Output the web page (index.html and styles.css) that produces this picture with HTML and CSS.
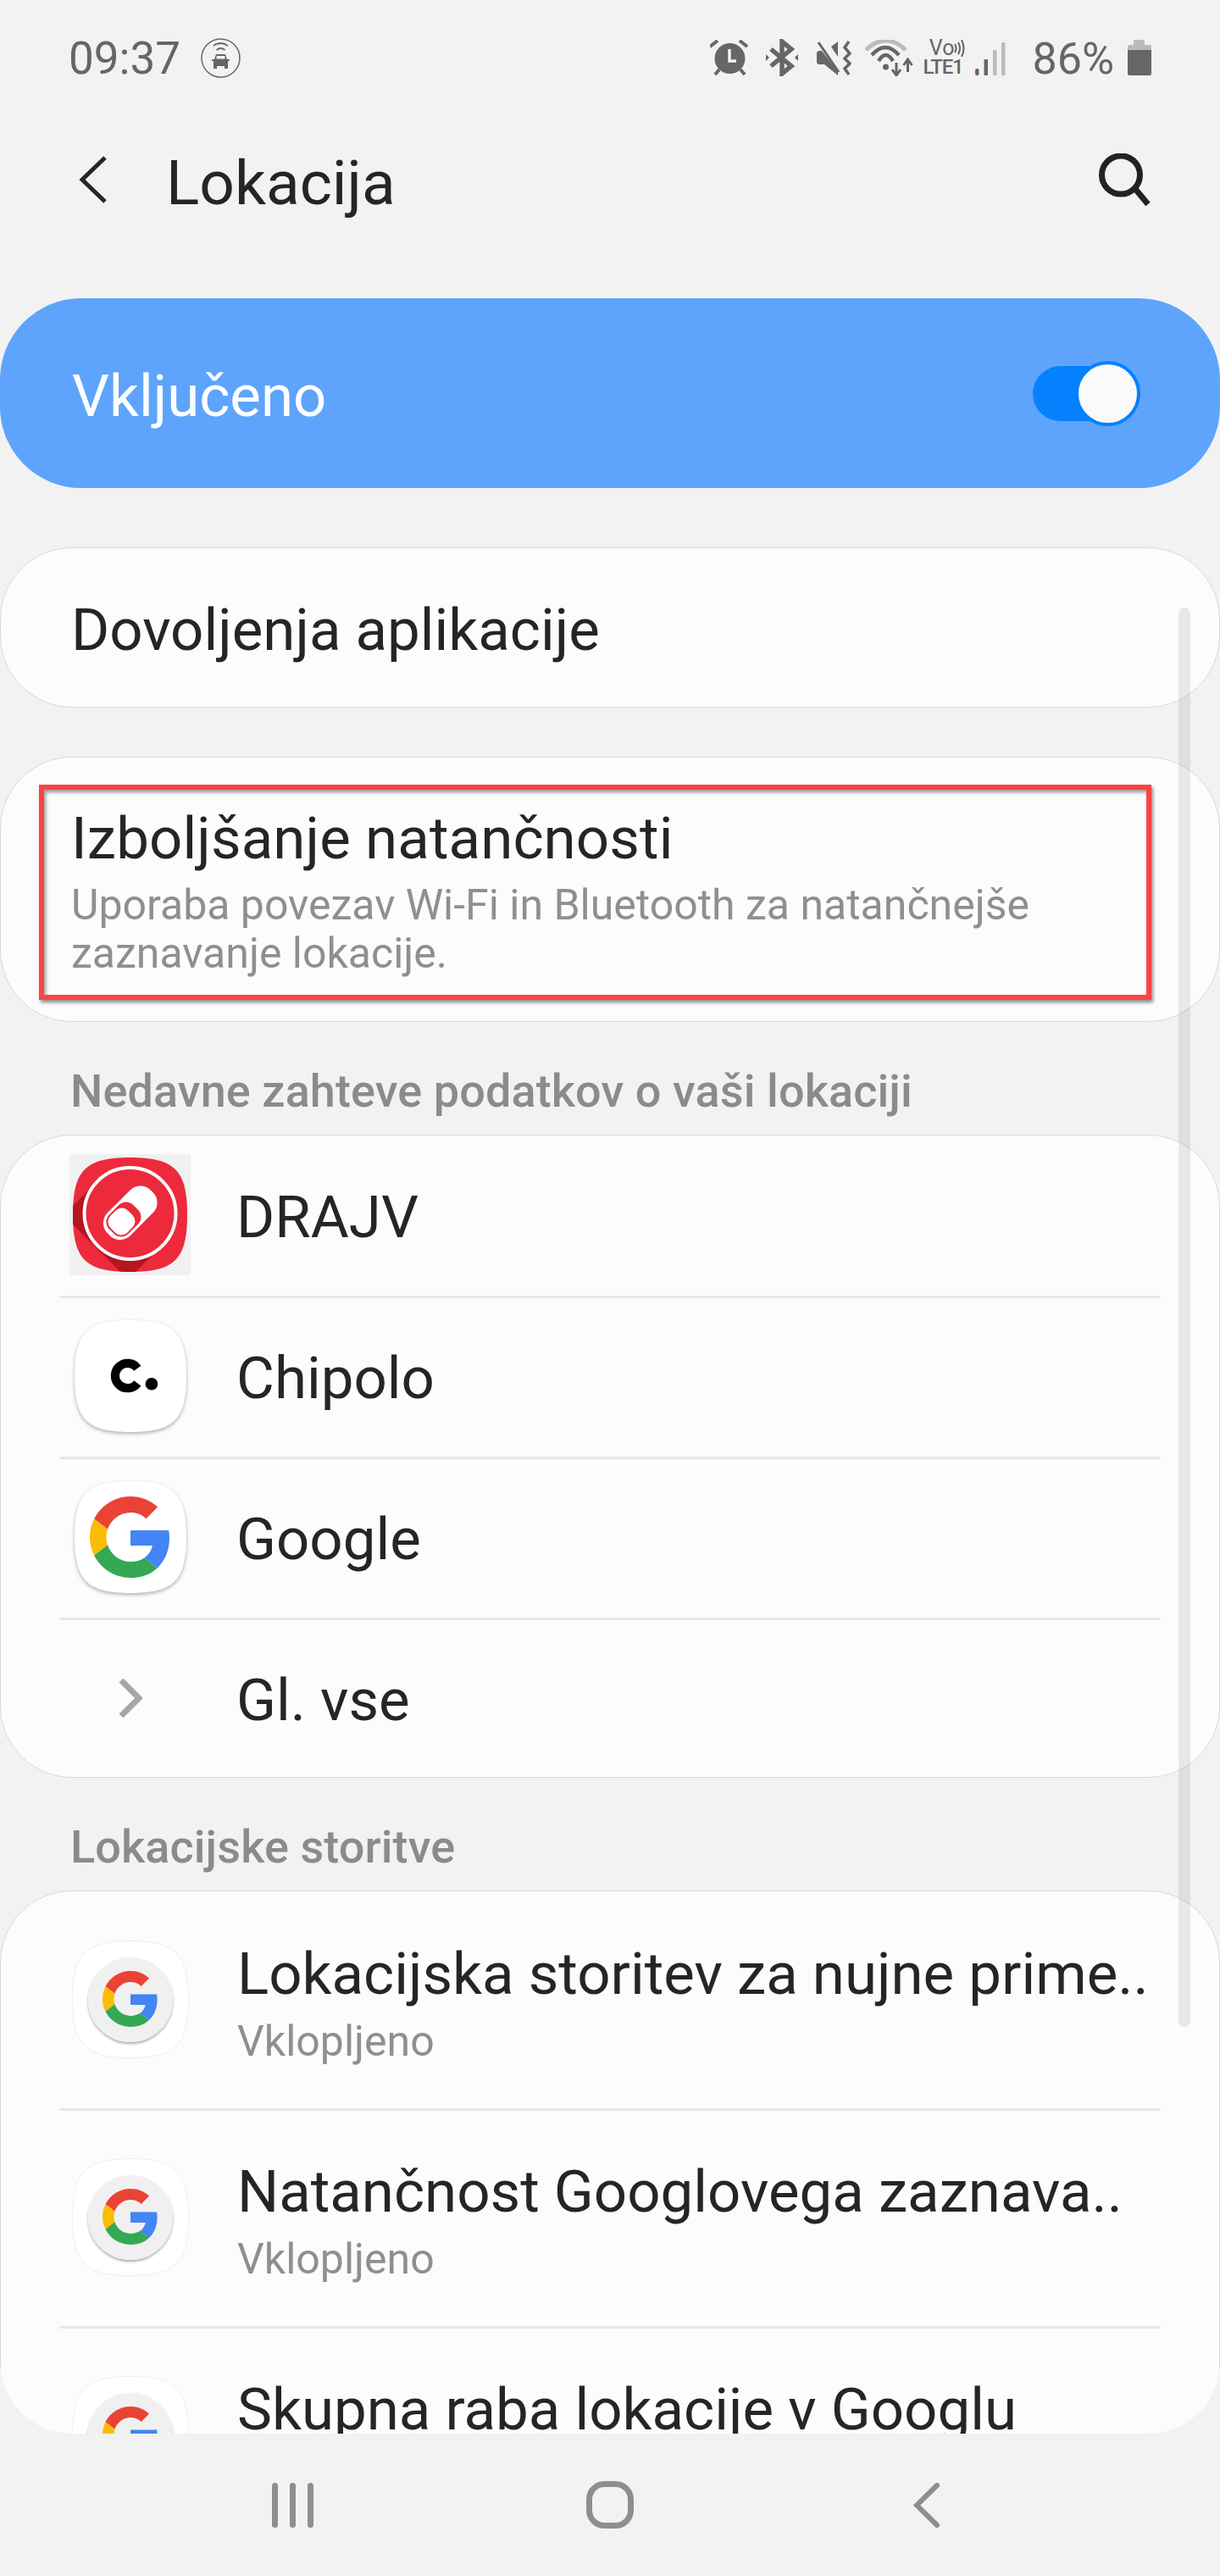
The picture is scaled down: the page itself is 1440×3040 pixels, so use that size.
FILE: index.html

```html
<!DOCTYPE html>
<html lang="sl">
<head>
    <meta charset="UTF-8">
    <meta name="viewport" content="width=device-width, initial-scale=1.0">
    <title>Lokacija</title>
    <link rel="stylesheet" href="styles.css">
</head>
<body>
    <!-- shared logo shapes -->
    <svg class="defs" width="0" height="0">
        <filter id="disc-shadow" x="-10%" y="-10%" width="120%" height="125%">
            <feDropShadow dx="0" dy="2" stdDeviation="1.5" flood-opacity="0.35"/>
        </filter>
        <clipPath id="squircle-clip">
            <path d="M67.5 0C120 0 135 15 135 67.5S120 135 67.5 135 0 120 0 67.5 15 0 67.5 0Z"/>
        </clipPath>
        <symbol id="g-logo" viewBox="0 0 48 48">
            <path fill="#EA4335" d="M24 9.5c3.54 0 6.71 1.22 9.21 3.6l6.85-6.85C35.9 2.38 30.47 0 24 0 14.62 0 6.51 5.38 2.56 13.22l7.98 6.19C12.43 13.72 17.74 9.5 24 9.5z"/>
            <path fill="#4285F4" d="M46.98 24.55c0-1.57-.15-3.09-.38-4.55H24v9.02h12.94c-.58 2.96-2.26 5.48-4.78 7.18l7.73 6c4.51-4.18 7.09-10.36 7.09-17.65z"/>
            <path fill="#FBBC05" d="M10.53 28.59c-.48-1.45-.76-2.99-.76-4.59s.27-3.14.76-4.59l-7.98-6.19C.92 16.46 0 20.12 0 24c0 3.88.92 7.54 2.56 10.78l7.97-6.19z"/>
            <path fill="#34A853" d="M24 48c6.48 0 11.93-2.13 15.89-5.81l-7.73-6c-2.15 1.45-4.92 2.3-8.16 2.3-6.26 0-11.57-4.22-13.47-9.91l-7.98 6.19C6.51 42.62 14.62 48 24 48z"/>
        </symbol>
        <symbol id="service-logo" viewBox="0 0 138 139">
            <path d="M69 .5C122 .5 137.500 16 137.500 69.500S122 138.500 69 138.500 .5 123 .5 69.500 16 .5 69 .5Z" fill="#fff" stroke="#eeeeee"/>
            <circle cx="69" cy="70" r="50" fill="#f0f0f0" filter="url(#disc-shadow)"/>
            <use href="#g-logo" x="36" y="35" width="66" height="68"/>
        </symbol>
    </svg>

    <div class="screen">
        <div class="status-bar">
            <div class="status-left">
                <span class="time">09:37</span>
                <svg class="ic-car" width="47" height="47" viewBox="0 0 47 47">
                    <circle cx="23.5" cy="23.5" r="22.5" fill="none" stroke="#666" stroke-width="1.5"/>
                    <path d="M15 9Q23.5 3 32 9M18.5 14Q23.500 10 28.500 14" fill="none" stroke="#666" stroke-width="1.800"/>
                    <path d="M16 25l2-6h11l2 6h3v2h-2v9h-4v-3h-9v3h-4v-9h-2v-2z" fill="#666"/>
                    <rect x="18.500" y="21" width="10" height="3.500" fill="#f2f2f2"/>
                </svg>
            </div>
            <div class="status-right">
                <svg class="ic-alarm" width="45" height="42" viewBox="0 0 45 42">
                    <circle cx="23.5" cy="22" r="18" fill="#666"/>
                    <path d="M23 11V25H31" fill="none" stroke="#f2f2f2" stroke-width="3.5"/>
                    <path d="M0 8L9 1M35 1L44 8M6 41L11 35M41 41L36 35" fill="none" stroke="#666" stroke-width="4"/>
                </svg>
                <svg class="ic-bt" width="39" height="44" viewBox="0 0 39 44">
                    <path d="M6 12L30 32L19 41V3L30 12L6 32" fill="none" stroke="#666" stroke-width="5.5"/>
                    <path d="M0 18L4 22L0 26ZM38 18L34 22L38 26Z" fill="#666"/>
                </svg>
                <svg class="ic-mute" width="41" height="42" viewBox="0 0 41 42">
                    <path d="M2 13H6L25 37V42L9 29H2L0 27V15Z" fill="#666"/>
                    <path d="M17 8L25 2V20Z" fill="#666"/>
                    <path d="M2 3L26 38" fill="none" stroke="#666" stroke-width="3"/>
                    <path d="M38 2L33 9L39 16L33 22L39 28L33 34L38 41" fill="none" stroke="#666" stroke-width="3.5"/>
                </svg>
                <svg class="ic-wifi" width="57" height="43" viewBox="0 0 57 43">
                    <path d="M1 12Q24.5 -10 48 12" fill="none" stroke="#bbb" stroke-width="5"/>
                    <path d="M8 18Q24 0 40 18M16 25Q24.5 11 33 25" fill="none" stroke="#666" stroke-width="4.5"/>
                    <circle cx="24.5" cy="32" r="3.5" fill="#666"/>
                    <path d="M37 27V40M32 35L37 42L42 35" fill="none" stroke="#666" stroke-width="3"/>
                    <path d="M50.5 38V25M45.5 30L50.5 23L55.5 30" fill="none" stroke="#666" stroke-width="3"/>
                </svg>
                <div class="volte">
                    <div class="volte-top">
                        <span>Vo</span>
                        <svg width="13" height="20" viewBox="0 0 13 20">
                            <path d="M1 5Q4 10 1 15M5 3Q9 10 5 17M9 0Q14 10 9 20" fill="none" stroke="#666" stroke-width="2"/>
                        </svg>
                    </div>
                    <div class="volte-lte">LTE1</div>
                </div>
                <svg class="ic-signal" width="36" height="39" viewBox="0 0 36 39">
                    <rect x="0" y="31" width="4.5" height="8" rx="2" fill="#666"/>
                    <rect x="10.5" y="20" width="4.5" height="19" rx="1" fill="#666"/>
                    <rect x="21" y="9" width="4.5" height="30" rx="1" fill="#bbb"/>
                    <rect x="31" y="0" width="4.5" height="39" rx="1" fill="#bbb"/>
                </svg>
                <span class="battery-text">86%</span>
                <svg class="ic-battery" width="28" height="42" viewBox="0 0 28 42">
                    <path d="M7 1Q7 0 8 0H19Q20 0 20 1V6H26Q28 6 28 8V12H0V8Q0 6 2 6H7Z" fill="#bbb"/>
                    <path d="M0 12H28V40Q28 42 26 42H2Q0 42 0 40Z" fill="#666"/>
                </svg>
            </div>
        </div>

        <div class="app-bar">
            <svg width="33" height="56" viewBox="0 0 33 56">
                <path d="M31 2L4 28L31 54" fill="none" stroke="#252525" stroke-width="5"/>
            </svg>
            <h1 class="page-title">Lokacija</h1>
            <svg class="search-icon" width="62" height="62" viewBox="0 0 62 62">
                <circle cx="26" cy="25.5" r="22.5" fill="none" stroke="#222" stroke-width="7"/>
                <path d="M43 42L58 60" fill="none" stroke="#222" stroke-width="7"/>
            </svg>
        </div>

        <div class="scroll-area">
            <div class="master-switch">
                <span class="item-title on-blue">Vključeno</span>
                <div class="toggle">
                    <div class="toggle-track"></div>
                    <div class="toggle-thumb"></div>
                </div>
            </div>

            <div class="card card-single">
                <span class="item-title">Dovoljenja aplikacije</span>
            </div>

            <div class="card card-accuracy">
                <div class="item-title">Izboljšanje natančnosti</div>
                <div class="item-sub">Uporaba povezav Wi-Fi in Bluetooth za natančnejše<br>zaznavanje lokacije.</div>
                <div class="highlight-box"></div>
            </div>

            <div class="section-label">Nedavne zahteve podatkov o vaši lokaciji</div>

            <div class="card card-list">
                <div class="app-row">
                    <div class="app-icon-wrap drajv-bg">
                        <svg width="135" height="135" viewBox="0 0 135 135">
                            <g clip-path="url(#squircle-clip)">
                                <rect width="135" height="135" fill="#ec2a3b"/>
                                <path d="M29 28L-11 68L65 144L105 104Z" fill="#b5161f"/>
                            </g>
                            <circle cx="67.5" cy="66" r="54" fill="#ec2a3b" stroke="#fff" stroke-width="4"/>
                            <g transform="rotate(-45 67 66)">
                                <rect x="32" y="47" width="72" height="38" rx="17" fill="#fff"/>
                                <rect x="37" y="50" width="40" height="32" rx="12" fill="#ec2a3b"/>
                                <rect x="39" y="52" width="29" height="28" rx="10" fill="#fff"/>
                            </g>
                        </svg>
                    </div>
                    <span class="item-title">DRAJV</span>
                </div>
                <div class="divider"></div>
                <div class="app-row">
                    <div class="app-icon-wrap">
                        <svg class="squircle-shadow" width="132" height="132" viewBox="0 0 135 135">
                            <path d="M67.5 0C120 0 135 15 135 67.5S120 135 67.5 135 0 120 0 67.5 15 0 67.5 0Z" fill="#fff"/>
                            <path d="M76 59A15 15 0 1 0 76 77" fill="none" stroke="#000" stroke-width="10.5" transform="translate(0 -1)"/>
                            <circle cx="93" cy="77" r="7.5" fill="#000"/>
                        </svg>
                    </div>
                    <span class="item-title">Chipolo</span>
                </div>
                <div class="divider"></div>
                <div class="app-row">
                    <div class="app-icon-wrap">
                        <svg class="squircle-shadow" width="132" height="132" viewBox="0 0 132 132">
                            <path d="M66 0C117 0 132 15 132 66S117 132 66 132 0 117 0 66 15 0 66 0Z" fill="#fff"/>
                            <use href="#g-logo" x="18" y="17" width="96" height="98"/>
                        </svg>
                    </div>
                    <span class="item-title">Google</span>
                </div>
                <div class="divider"></div>
                <div class="app-row">
                    <div class="app-icon-wrap">
                        <svg width="28" height="46" viewBox="0 0 28 46">
                            <path d="M3 2L24 23L3 44" fill="none" stroke="#a6a6a6" stroke-width="7"/>
                        </svg>
                    </div>
                    <span class="item-title">Gl. vse</span>
                </div>
            </div>

            <div class="section-label">Lokacijske storitve</div>

            <div class="card card-services">
                <div class="service-row">
                    <svg class="service-icon" width="138" height="139"><use href="#service-logo" width="138" height="139"/></svg>
                    <div class="service-text">
                        <div class="item-title">Lokacijska storitev za nujne prime..</div>
                        <div class="item-sub">Vklopljeno</div>
                    </div>
                </div>
                <div class="divider"></div>
                <div class="service-row">
                    <svg class="service-icon" width="138" height="139"><use href="#service-logo" width="138" height="139"/></svg>
                    <div class="service-text">
                        <div class="item-title">Natančnost Googlovega zaznava..</div>
                        <div class="item-sub">Vklopljeno</div>
                    </div>
                </div>
                <div class="divider"></div>
                <div class="service-row">
                    <svg class="service-icon" width="138" height="139"><use href="#service-logo" width="138" height="139"/></svg>
                    <div class="service-text">
                        <div class="item-title">Skupna raba lokacije v Googlu</div>
                    </div>
                </div>
            </div>
        </div>

        <div class="scrollbar"></div>

        <div class="nav-bar">
            <svg class="nav-recent" width="49" height="53" viewBox="0 0 49 53">
                <rect x="0" y="0" width="7" height="53" rx="3.5"/>
                <rect x="21" y="0" width="7" height="53" rx="3.5"/>
                <rect x="42" y="0" width="7" height="53" rx="3.5"/>
            </svg>
            <svg class="nav-home" width="56" height="56" viewBox="0 0 56 56">
                <rect x="3.5" y="3.5" width="49" height="49" rx="18" fill="none" stroke="#8e8e8e" stroke-width="7"/>
            </svg>
            <svg class="nav-back" width="31" height="53" viewBox="0 0 31 53">
                <path d="M28 3L4 26.5L28 50" fill="none" stroke="#8e8e8e" stroke-width="6" stroke-linecap="round"/>
            </svg>
        </div>
    </div>
</body>
</html>
```

FILE: styles.css

```css
* {
    margin: 0;
    padding: 0;
    box-sizing: border-box;
}

body {
    font-family: Roboto, "Liberation Sans", sans-serif;
    background-color: #f2f2f2;
    color: #252525;
}

.defs {
    display: block;
    height: 0;
}

.screen {
    position: relative;
    width: 1440px;
    height: 3040px;
    display: flex;
    flex-direction: column;
    overflow: hidden;
    background-color: #f2f2f2;
}

/* status bar */
.status-bar {
    height: 136px;
    flex: none;
    display: flex;
    align-items: center;
    justify-content: space-between;
    padding: 0 81px;
    color: #666;
}

.status-left,
.status-right {
    display: flex;
    align-items: center;
}

.time {
    font-size: 53px;
    margin-top: 2px;
}

.ic-car { margin-left: 24px; }
.ic-bt { margin-left: 21px; }
.ic-mute { margin-left: 21px; }
.ic-wifi { margin-left: 16px; }
.ic-signal { margin-left: 12px; margin-top: 3px; }
.ic-battery { margin-left: 16px; }

.volte {
    width: 50px;
    height: 42px;
    margin-left: 11px;
    display: flex;
    flex-direction: column;
    justify-content: space-between;
}

.volte-top {
    display: flex;
    justify-content: flex-end;
    align-items: center;
    height: 20px;
    font-size: 25px;
    line-height: 20px;
}

.volte-lte {
    font-size: 24px;
    line-height: 19px;
    font-weight: 500;
    letter-spacing: -1.2px;
}

.battery-text {
    font-size: 52px;
    margin-left: 31px;
    margin-top: 2px;
}

/* app bar */
.app-bar {
    height: 216px;
    flex: none;
    display: flex;
    align-items: center;
    padding: 0 81px 64px 93px;
}

.page-title {
    font-size: 73px;
    font-weight: 400;
    line-height: 84px;
    margin: 8px 0 0 70px;
    flex: 1;
}

/* scrolling content */
.scroll-area {
    height: 2520px;
    flex: none;
    overflow: hidden;
    border-radius: 0 0 85px 85px;
}

.master-switch {
    height: 224px;
    display: flex;
    align-items: center;
    justify-content: space-between;
    padding: 0 94px 0 85px;
    background-color: #5ea4fc;
    border-radius: 96px;
    margin-bottom: 70px;
}

.toggle {
    position: relative;
    width: 127px;
    height: 77px;
}

.toggle-track {
    width: 110px;
    height: 65px;
    margin-top: 6px;
    border-radius: 33px;
    background-color: #0581fe;
}

.toggle-thumb {
    position: absolute;
    top: 0;
    right: 0;
    width: 77px;
    height: 77px;
    border: 4px solid #0581fe;
    border-radius: 50%;
    background-color: #fafafa;
}

.card {
    position: relative;
    background-color: #fcfcfc;
    border: 1px solid #d9d9d9;
    border-radius: 85px;
}

.item-title {
    font-size: 69px;
    line-height: 80px;
    white-space: nowrap;
}

.on-blue {
    color: #fff;
    padding-top: 7px;
}

.item-sub {
    font-size: 50px;
    line-height: 57px;
    color: #8f8f8f;
    white-space: nowrap;
}

.card-single {
    height: 189px;
    display: flex;
    align-items: center;
    padding: 7px 0 0 83px;
    margin-bottom: 58px;
}

.card-accuracy {
    height: 313px;
    padding: 56px 0 0 83px;
}

.card-accuracy .item-title {
    letter-spacing: 0.1px;
}

.card-accuracy .item-sub {
    margin-top: 10px;
}

/* red annotation drawn on top of the card */
.highlight-box {
    position: absolute;
    left: 45px;
    top: 32px;
    width: 1313px;
    height: 254px;
    border: 6px solid #fc4343;
    box-shadow: 2px 3px 4px rgba(0, 0, 0, 0.45), inset 2px 3px 4px rgba(0, 0, 0, 0.4);
}

.section-label {
    height: 133px;
    padding: 52px 0 0 83px;
    font-size: 54px;
    line-height: 60px;
    font-weight: 500;
    letter-spacing: 0.1px;
    color: #8b8b8b;
}

.card-list {
    height: 759px;
    border-radius: 85px;
}

.divider {
    height: 3px;
    margin: 2px 69px -2px;
    background-color: #e8e8e8;
}

.app-row {
    height: 187px;
    display: flex;
    align-items: center;
    padding-left: 81px;
}

.app-icon-wrap {
    width: 143px;
    height: 143px;
    flex: none;
    display: flex;
    align-items: center;
    justify-content: center;
    margin-right: 54px;
}

.drajv-bg {
    background-color: #f1f1f1;
}

.squircle-shadow {
    filter: drop-shadow(0 2px 2px rgba(0, 0, 0, 0.3));
}

.app-row .item-title {
    padding-top: 7px;
}

.card-services {
    height: 900px;
}

.service-row {
    height: 254px;
    display: flex;
    align-items: center;
    padding-left: 84px;
}

.service-icon {
    flex: none;
    margin-right: 57px;
}

.service-text {
    height: 148px;
    margin-top: 10px;
}

.service-text .item-sub {
    margin-top: 11px;
}

.scrollbar {
    position: absolute;
    left: 1391px;
    top: 717px;
    width: 14px;
    height: 1675px;
    border-radius: 7px;
    background-color: rgba(0, 0, 0, 0.08);
}

/* bottom navigation */
.nav-bar {
    flex: 1;
    display: flex;
    align-items: center;
    padding-left: 321px;
}

.nav-recent {
    fill: #8e8e8e;
}

.nav-home {
    margin-left: 322px;
}

.nav-back {
    margin-left: 330px;
}
```
